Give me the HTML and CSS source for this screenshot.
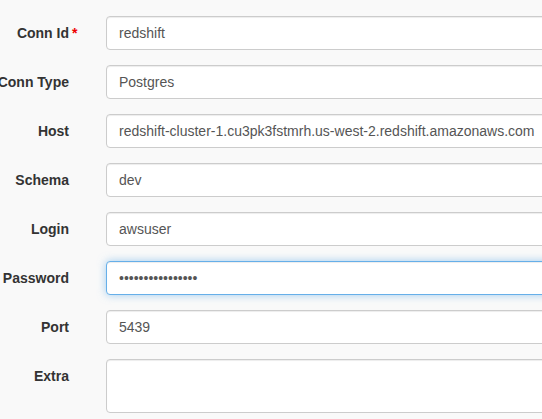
FILE: index.html
```html
<!DOCTYPE html>
<html>
<head>
<meta charset="utf-8">
<link rel="stylesheet" href="styles.css">
</head>
<body>
<form class="form">
  <div class="row">
    <label class="lbl">Conn Id<span class="req">*</span></label>
    <input class="ctl" type="text" value="redshift">
  </div>
  <div class="row">
    <label class="lbl">Conn Type</label>
    <input class="ctl" type="text" value="Postgres">
  </div>
  <div class="row">
    <label class="lbl">Host</label>
    <input class="ctl" type="text" value="redshift-cluster-1.cu3pk3fstmrh.us-west-2.redshift.amazonaws.com">
  </div>
  <div class="row">
    <label class="lbl">Schema</label>
    <input class="ctl" type="text" value="dev">
  </div>
  <div class="row">
    <label class="lbl">Login</label>
    <input class="ctl" type="text" value="awsuser">
  </div>
  <div class="row">
    <label class="lbl">Password</label>
    <input class="ctl focus" type="password" value="aaaaaaaaaaaaaaaa">
  </div>
  <div class="row">
    <label class="lbl">Port</label>
    <input class="ctl" type="text" value="5439">
  </div>
  <div class="row">
    <label class="lbl">Extra</label>
    <textarea class="ctl area"></textarea>
  </div>
</form>
</body>
</html>
```

FILE: styles.css
```css
html, body {
  margin: 0;
  padding: 0;
  background: #f9f9f9;
  overflow: hidden;
  width: 542px;
  height: 419px;
}
body {
  font-family: "Liberation Sans", Arial, sans-serif;
  font-size: 14px;
  color: #333;
}
.form {
  padding-top: 16px;
  display: flex;
  flex-direction: column;
  gap: 15px;
}
.row {
  display: grid;
  grid-template-columns: 69px 500px;
  column-gap: 37px;
  align-items: start;
}
.lbl {
  display: block;
  position: relative;
  text-align: right;
  font-weight: bold;
  white-space: nowrap;
  padding-top: 7px;
  line-height: 20px;
  direction: rtl;
}
.lbl .req {
  position: absolute;
  left: 100%;
  margin-left: 3px;
  color: #e00;
  direction: ltr;
}
.ctl {
  box-sizing: border-box;
  width: 500px;
  height: 34px;
  margin: 0;
  padding: 6px 12px;
  font-family: "Liberation Sans", Arial, sans-serif;
  font-size: 14px;
  line-height: 20px;
  color: #555;
  background: #fff;
  border: 1px solid #ccc;
  border-radius: 4px;
  box-shadow: inset 0 1px 1px rgba(0,0,0,.075);
  outline: none;
}
.ctl.focus {
  border-color: #66afe9;
  box-shadow: inset 0 1px 1px rgba(0,0,0,.075), 0 0 8px rgba(102,175,233,.6);
}
.area {
  height: 54px;
  resize: none;
  display: block;
}
```
